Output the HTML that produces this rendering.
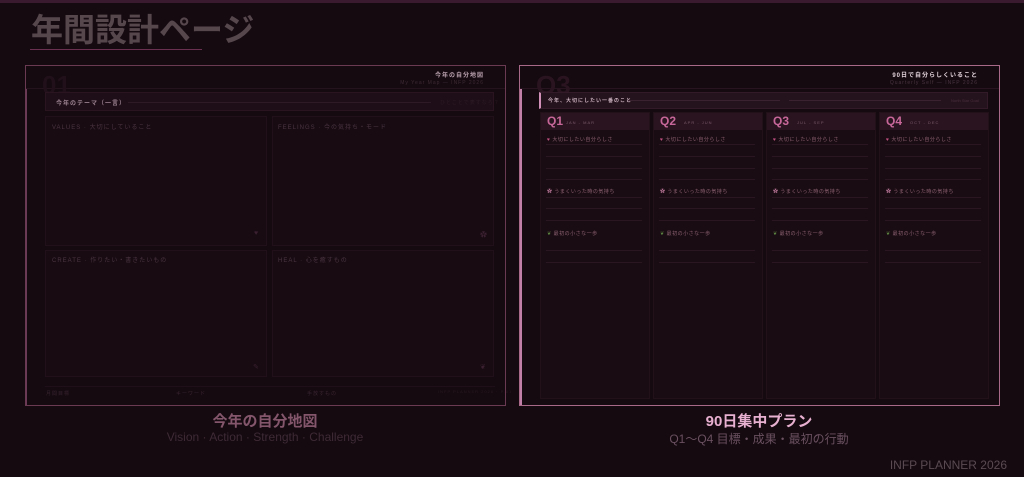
<!DOCTYPE html>
<html><head><meta charset="utf-8"><style>
*{margin:0;padding:0;box-sizing:border-box}
body{width:1024px;height:477px;background:#150a10;position:relative;overflow:hidden;font-family:"Liberation Sans","Noto Sans CJK JP",sans-serif}
.a{position:absolute}
.t{font-size:6px;letter-spacing:1px;white-space:nowrap}
.it{position:absolute;font-size:5px;color:#8a6070;white-space:nowrap;letter-spacing:.5px}
.ln{position:absolute;width:96px;height:1px;background:#2a1620}
</style></head><body>
<div class="a" style="left:0;top:0;width:1024px;height:3px;background:#3a1a2e"></div>
<div class="a" style="left:31px;top:10px;font-size:32px;font-weight:bold;color:#56474d;line-height:40px">年間設計ページ</div>
<div class="a" style="left:30px;top:49px;width:172px;height:1px;background:#6a3050"></div>

<div class="a" style="left:25px;top:65px;width:481px;height:341px;border:1px solid #6a3a52;background:#150a10"></div>
<div class="a" style="left:26px;top:88px;width:479px;height:1px;background:#24121c"></div>
<div class="a" style="left:26px;top:89px;width:1px;height:316px;background:#6a3a58"></div>
<div class="a" style="left:42px;top:72px;font-size:26px;font-weight:bold;color:#21101a;line-height:26px">01</div>
<div class="a t" style="right:540px;top:70px;color:#b8a0ac;font-weight:bold">今年の自分地図</div>
<div class="a t" style="right:540px;top:80px;color:#3e2a34;font-size:5px">My Year Map — INFP 2026</div>
<div class="a" style="left:45px;top:92px;width:449px;height:19px;background:#1e0e17;border:1px solid #2a1420"></div>
<div class="a t" style="left:56px;top:98px;color:#9a8090;font-weight:bold">今年のテーマ（一言）</div>
<div class="a" style="left:128px;top:102px;width:303px;height:1px;background:#2e1a26"></div>
<div class="a t" style="left:440px;top:99px;color:#2e1c26;font-size:5px">ひとことで表すなら？</div>
<div class="a" style="left:45px;top:116px;width:222px;height:130px;border:1px solid #211019;background:#180b12"></div>
<div class="a" style="left:272px;top:116px;width:222px;height:130px;border:1px solid #211019;background:#180b12"></div>
<div class="a" style="left:45px;top:250px;width:222px;height:127px;border:1px solid #211019;background:#180b12"></div>
<div class="a" style="left:272px;top:250px;width:222px;height:127px;border:1px solid #211019;background:#180b12"></div>
<div class="a t" style="left:52px;top:122px;color:#4a3440">VALUES · 大切にしていること</div>
<div class="a t" style="left:278px;top:122px;color:#4a3440">FEELINGS · 今の気持ち・モード</div>
<div class="a t" style="left:52px;top:255px;color:#4a3440">CREATE · 作りたい・書きたいもの</div>
<div class="a t" style="left:278px;top:255px;color:#4a3440">HEAL · 心を癒すもの</div>
<div class="a" style="left:254px;top:230px;font-size:7px;color:#3a2030">♥</div>
<div class="a" style="left:480px;top:230px;font-size:7px;color:#3a2030">✿</div>
<div class="a" style="left:253px;top:363px;font-size:7px;color:#3a2030">✎</div>
<div class="a" style="left:480px;top:363px;font-size:7px;color:#3a2030">❦</div>
<div class="a" style="left:45px;top:386px;width:450px;height:1px;background:#1f0f18"></div>
<div class="a t" style="left:46px;top:390px;color:#3a2430;font-size:5px">月間目標</div>
<div class="a t" style="left:176px;top:390px;color:#3a2430;font-size:5px">キーワード</div>
<div class="a t" style="left:307px;top:390px;color:#3a2430;font-size:5px">手放すもの</div>
<div class="a t" style="left:438px;top:389px;color:#2a1a22;font-size:4px">INFP PLANNER 2026 · P.01</div>

<div class="a" style="left:519px;top:65px;width:481px;height:341px;border:1px solid #a86888;background:#150a10"></div>
<div class="a" style="left:520px;top:88px;width:479px;height:1px;background:#281420"></div>
<div class="a" style="left:520px;top:89px;width:2px;height:316px;background:#c080a8"></div>
<div class="a" style="left:536px;top:72px;font-size:26px;font-weight:bold;color:#2a1420;line-height:26px">Q3</div>
<div class="a t" style="right:46px;top:70px;color:#e0d0d8;font-weight:bold">90日で自分らしくいること</div>
<div class="a t" style="right:46px;top:80px;color:#4a3440;font-size:5px">Quarterly Self — INFP 2026</div>
<div class="a" style="left:539px;top:92px;width:449px;height:17px;background:#24121c;border:1px solid #331a28;border-left:2px solid #d090b8"></div>
<div class="a t" style="left:548px;top:97px;color:#c8b0bc;font-weight:bold;font-size:5px">今年、大切にしたい一番のこと</div>
<div class="a" style="left:628px;top:100px;width:152px;height:1px;background:#3a2230"></div>
<div class="a" style="left:789px;top:100px;width:152px;height:1px;background:#3a2230"></div>
<div class="a t" style="left:951px;top:98px;color:#4a3040;font-size:4px;letter-spacing:0">North Star Goal</div>

<div class="a" style="left:540px;top:112px;width:110px;height:287px;border:1px solid #231119;background:#1a0c13"></div>
<div class="a" style="left:653px;top:112px;width:110px;height:287px;border:1px solid #231119;background:#1a0c13"></div>
<div class="a" style="left:766px;top:112px;width:110px;height:287px;border:1px solid #231119;background:#1a0c13"></div>
<div class="a" style="left:879px;top:112px;width:110px;height:287px;border:1px solid #231119;background:#1a0c13"></div>
<div class="a" style="left:541px;top:113px;width:108px;height:17px;background:#2a1420"></div>
<div class="a" style="left:654px;top:113px;width:108px;height:17px;background:#2a1420"></div>
<div class="a" style="left:767px;top:113px;width:108px;height:17px;background:#2a1420"></div>
<div class="a" style="left:880px;top:113px;width:108px;height:17px;background:#2a1420"></div>

<div class="a" style="left:547px;top:114px;font-size:12px;font-weight:bold;color:#c8689a">Q1</div><div class="a t" style="left:566px;top:120px;color:#7a5a6a;font-size:4px">JAN - MAR</div>
<div class="a" style="left:660px;top:114px;font-size:12px;font-weight:bold;color:#c8689a">Q2</div><div class="a t" style="left:684px;top:120px;color:#7a5a6a;font-size:4px">APR - JUN</div>
<div class="a" style="left:773px;top:114px;font-size:12px;font-weight:bold;color:#c8689a">Q3</div><div class="a t" style="left:797px;top:120px;color:#7a5a6a;font-size:4px">JUL - SEP</div>
<div class="a" style="left:886px;top:114px;font-size:12px;font-weight:bold;color:#c8689a">Q4</div><div class="a t" style="left:910px;top:120px;color:#7a5a6a;font-size:4px">OCT - DEC</div>

<div class="it" style="left:547px;top:136px"><span style="color:#c05080">♥</span> 大切にしたい自分らしさ</div>
<div class="it" style="left:660px;top:136px"><span style="color:#c05080">♥</span> 大切にしたい自分らしさ</div>
<div class="it" style="left:773px;top:136px"><span style="color:#c05080">♥</span> 大切にしたい自分らしさ</div>
<div class="it" style="left:886px;top:136px"><span style="color:#c05080">♥</span> 大切にしたい自分らしさ</div>
<div class="it" style="left:547px;top:188px"><span style="color:#b07090">✿</span> うまくいった時の気持ち</div>
<div class="it" style="left:660px;top:188px"><span style="color:#b07090">✿</span> うまくいった時の気持ち</div>
<div class="it" style="left:773px;top:188px"><span style="color:#b07090">✿</span> うまくいった時の気持ち</div>
<div class="it" style="left:886px;top:188px"><span style="color:#b07090">✿</span> うまくいった時の気持ち</div>
<div class="it" style="left:547px;top:230px"><span style="color:#5a8040">❦</span> 最初の小さな一歩</div>
<div class="it" style="left:660px;top:230px"><span style="color:#5a8040">❦</span> 最初の小さな一歩</div>
<div class="it" style="left:773px;top:230px"><span style="color:#5a8040">❦</span> 最初の小さな一歩</div>
<div class="it" style="left:886px;top:230px"><span style="color:#5a8040">❦</span> 最初の小さな一歩</div>

<div class="ln" style="left:546px;top:144px"></div><div class="ln" style="left:546px;top:156px"></div><div class="ln" style="left:546px;top:168px"></div><div class="ln" style="left:546px;top:179px"></div><div class="ln" style="left:546px;top:197px"></div><div class="ln" style="left:546px;top:208px"></div><div class="ln" style="left:546px;top:220px"></div><div class="ln" style="left:546px;top:250px"></div><div class="ln" style="left:546px;top:262px"></div>
<div class="ln" style="left:659px;top:144px"></div><div class="ln" style="left:659px;top:156px"></div><div class="ln" style="left:659px;top:168px"></div><div class="ln" style="left:659px;top:179px"></div><div class="ln" style="left:659px;top:197px"></div><div class="ln" style="left:659px;top:208px"></div><div class="ln" style="left:659px;top:220px"></div><div class="ln" style="left:659px;top:250px"></div><div class="ln" style="left:659px;top:262px"></div>
<div class="ln" style="left:772px;top:144px"></div><div class="ln" style="left:772px;top:156px"></div><div class="ln" style="left:772px;top:168px"></div><div class="ln" style="left:772px;top:179px"></div><div class="ln" style="left:772px;top:197px"></div><div class="ln" style="left:772px;top:208px"></div><div class="ln" style="left:772px;top:220px"></div><div class="ln" style="left:772px;top:250px"></div><div class="ln" style="left:772px;top:262px"></div>
<div class="ln" style="left:885px;top:144px"></div><div class="ln" style="left:885px;top:156px"></div><div class="ln" style="left:885px;top:168px"></div><div class="ln" style="left:885px;top:179px"></div><div class="ln" style="left:885px;top:197px"></div><div class="ln" style="left:885px;top:208px"></div><div class="ln" style="left:885px;top:220px"></div><div class="ln" style="left:885px;top:250px"></div><div class="ln" style="left:885px;top:262px"></div>

<div class="a" style="left:65px;width:400px;top:410px;text-align:center;font-size:15px;font-weight:bold;color:#84566c">今年の自分地図</div>
<div class="a" style="left:65px;width:400px;top:430px;text-align:center;font-size:12px;color:#3e2a35">Vision · Action · Strength · Challenge</div>
<div class="a" style="left:559px;width:400px;top:410px;text-align:center;font-size:15px;font-weight:bold;color:#e8b0d0">90日集中プラン</div>
<div class="a" style="left:559px;width:400px;top:430px;text-align:center;font-size:12px;color:#6a5060">Q1〜Q4 目標・成果・最初の行動</div>
<div class="a" style="right:17px;top:458px;font-size:12px;color:#5a4a52">INFP PLANNER 2026</div>
</body></html>
